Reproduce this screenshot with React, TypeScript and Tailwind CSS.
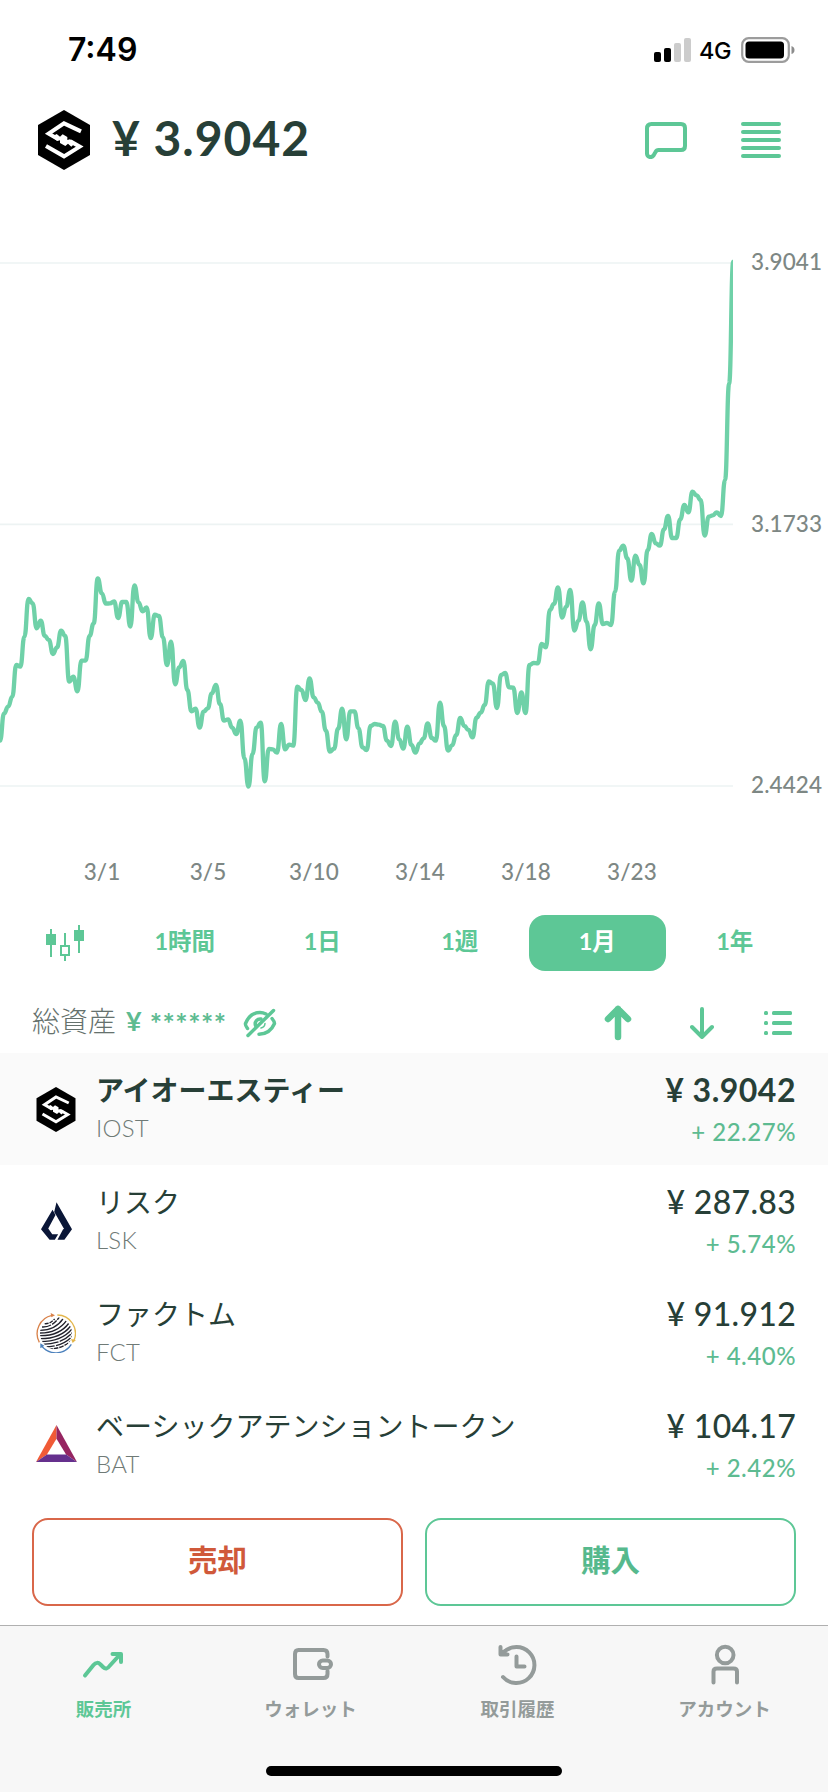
import React, { useMemo, useState } from 'react'
import clsx from 'clsx'

// 価格推移（チャート座標系）
const SERIES = [
  1502, 1420, 1400, 1370, 1275, 1280, 1190, 1077, 1090, 1165, 1142, 1188, 1200, 1242, 1222, 1172,
  1188, 1325, 1310, 1354, 1262, 1262, 1188, 1150, 1015, 1060, 1091, 1090, 1084, 1134, 1086, 1086,
  1160, 1036, 1087, 1114, 1102, 1194, 1124, 1128, 1192, 1275, 1205, 1333, 1282, 1263, 1350, 1414,
  1406, 1463, 1415, 1405, 1360, 1335, 1392, 1442, 1438, 1463, 1482, 1442, 1555, 1640, 1542, 1462,
  1448, 1624, 1527, 1528, 1538, 1452, 1528, 1514, 1517, 1340, 1350, 1380, 1315, 1372, 1388, 1415,
  1472, 1535, 1526, 1466, 1406, 1498, 1414, 1414, 1465, 1522, 1530, 1458, 1452, 1454, 1458, 1502,
  1518, 1445, 1498, 1526, 1460, 1515, 1538, 1510, 1495, 1450, 1494, 1502, 1388, 1458, 1532, 1516,
  1485, 1434, 1458, 1470, 1492, 1433, 1418, 1395, 1324, 1331, 1404, 1305, 1299, 1342, 1343, 1419,
  1357, 1419, 1275, 1269, 1270, 1212, 1222, 1110, 1092, 1042, 1133, 1100, 1050, 1172, 1142, 1087,
  1145, 1228, 1155, 1090, 1152, 1149, 1155, 1055, 932, 917, 955, 1022, 947, 975, 1030, 930,
  882, 910, 917, 868, 828, 894, 894, 838, 795, 817, 755, 766, 780, 887, 830, 826,
  817, 828, 720, 430, 65
]

const STEP = 12.22
const GRID_LINES = [69, 853, 1638]
const PRICE_LABELS = ['3.9041', '3.1733', '2.4424']
const DATE_LABELS = ['3/1', '3/5', '3/10', '3/14', '3/18', '3/23']
const PERIODS = ['1時間', '1日', '1週', '1月', '1年']

interface IconProps {
  className?: string
}

function IostLogo({ className }: IconProps) {
  return (
    <svg viewBox="0 0 156 180" className={className}>
      <path d="M78 0L156 45V135L78 180L0 135V45Z" fill="#000" />
      <g fill="none" stroke="#fff" strokeWidth="12">
        <path d="M129 64L78 40L32 71L60 87" />
        <path d="M24 108L78 139L125 110L97 94" />
      </g>
      <path
        d="M42 80L56 72L66 80L74 73L88 81V90L96 88L112 98L100 110L90 101L82 108L66 99V91L58 93Z"
        fill="#fff"
      />
    </svg>
  )
}

function LiskLogo() {
  return (
    <svg viewBox="0 0 94 114" className="h-[38px] w-[31px]" fill="#0a1637">
      <path d="M47 0L94 82L71 114H50L67 82L70 81L47 41L40 30Z" />
      <path d="M35 23L44 39L22 80L34 97H52L42 114H26L0 82Z" />
    </svg>
  )
}

function FactomLogo() {
  return (
    <svg viewBox="0 0 120 120" className="size-10" fill="none">
      <defs>
        <clipPath id="globe">
          <circle cx="60" cy="61" r="48" />
        </clipPath>
      </defs>
      <g clipPath="url(#globe)" stroke="#22222c" strokeWidth="4">
        <path d="M26 32Q40 34 56 18" strokeDasharray="12 3" />
        <path d="M18 42Q48 44 70 12" strokeDasharray="28 4 18 3" />
        <path d="M12 52Q58 52 82 16" />
        <path d="M10 60Q64 61 92 22" />
        <path d="M8 68Q70 70 99 30" />
        <path d="M10 77Q74 78 104 39" />
        <path d="M12 86Q78 86 108 48" />
        <path d="M18 94Q80 94 110 58" strokeDasharray="50 4 40 3" />
        <path d="M26 102Q82 101 110 68" strokeDasharray="30 4 50 3" />
        <path d="M36 108Q82 108 108 80" strokeDasharray="14 3" />
      </g>
      <path d="M10 88A56 56 0 0 1 48 7" stroke="#d9824a" strokeWidth="4" />
      <path d="M64 6A55 55 0 0 1 114 82" stroke="#e3b64c" strokeWidth="4" />
      <path d="M106 94A55 55 0 0 1 16 98" stroke="#4d82bd" strokeWidth="4" />
      <path d="M44 0L57 7L46 13Z" fill="#d9824a" />
      <path d="M105 78L120 81L110 90Z" fill="#e3b64c" />
      <path d="M13 106L13 91L25 98Z" fill="#4d82bd" />
    </svg>
  )
}

function BatLogo() {
  return (
    <svg viewBox="0 0 120 108" className="mb-[3px] h-[37px] w-[41px]">
      <path d="M60 0V40L32 86L0 108Z" fill="#f05a36" />
      <path d="M60 0L120 108L88 86L60 40Z" fill="#962561" />
      <path d="M0 108L32 86H88L120 108Z" fill="#65308d" />
    </svg>
  )
}

function CandleIcon() {
  return (
    <svg viewBox="0 0 38 36" className="h-9 w-[38px]" fill="#5dc796">
      <path d="M4 4h2v5h4v11H6v12H4V20H0V9h4z" />
      <path d="M18 8h2v12h4v11h-4v5h-2v-5h-4V20h4zM16 22v7h6v-7z" fillRule="evenodd" />
      <path d="M32 0h2v5h4v11h-4v12h-2V16h-4V5h4z" />
    </svg>
  )
}

function EyeOffIcon() {
  return (
    <svg viewBox="0 0 34 30" className="h-[30px] w-[34px]" fill="none" stroke="#5dc796" strokeWidth="3.500" strokeLinecap="round" strokeLinejoin="round">
      <path d="M4.500 20.500Q2 17 2.500 15.500Q7 4.500 17 4.500Q20 4.500 23 6" />
      <path d="M29 10.500Q31.500 13.500 31.500 15.500Q27 26 16 26.200" />
      <path d="M12.500 17.500A5 5 0 0 1 18 11" />
      <path d="M22 15.500A5 5 0 0 1 18 20" strokeWidth="1.500" />
      <path d="M5 27.500L30.500 2.500" />
    </svg>
  )
}

function PriceChart() {
  const path = useMemo(
    () =>
      SERIES.map((y, i) => {
        if (i === 0) return `M0 ${y}`
        const x = i * STEP
        const mid = x - STEP / 2
        return `C${mid.toFixed(1)} ${SERIES[i - 1]} ${mid.toFixed(1)} ${y} ${x.toFixed(1)} ${y}`
      }).join(''),
    []
  )

  return (
    <div className="mt-[59px] flex h-[560px]">
      <svg viewBox="0 0 2199 1680" className="h-[560px] w-[733px] shrink-0">
        {GRID_LINES.map(y => (
          <line key={y} x1="0" x2="2199" y1={y} y2={y} stroke="#edf3f3" strokeWidth="5" />
        ))}
        <path d={path} fill="none" stroke="#6fd1a8" strokeWidth="13" strokeLinejoin="round" />
      </svg>
      <div className="flex h-[559px] flex-col justify-between pt-[8px] pl-[18px] text-[22.500px] leading-[28px] font-medium tracking-[0.1px] text-[#7d8784]">
        {PRICE_LABELS.map(label => (
          <span key={label}>{label}</span>
        ))}
      </div>
    </div>
  )
}

const COINS = [
  { name: 'アイオーエスティー', symbol: 'IOST', price: '3.9042', change: '22.27', logo: <IostLogo className="h-[45px] w-10" /> },
  { name: 'リスク', symbol: 'LSK', price: '287.83', change: '5.74', logo: <LiskLogo /> },
  { name: 'ファクトム', symbol: 'FCT', price: '91.912', change: '4.40', logo: <FactomLogo /> },
  { name: 'ベーシックアテンショントークン', symbol: 'BAT', price: '104.17', change: '2.42', logo: <BatLogo /> }
]

const NAV_ITEMS = [
  {
    label: '販売所',
    icon: (
      <>
        <path d="M2 31.500L10.500 21Q14 17 17.500 20.500L20 23Q23.500 26.500 26.500 22L37 10.500" />
        <path d="M29.500 10H38V18" />
      </>
    )
  },
  {
    label: 'ウォレット',
    icon: (
      <>
        <path d="M37.500 12.500V10Q37.500 6 33.500 6H8.500Q5 6 5 10V30Q5 34 8.500 34H33.500Q37.500 34 37.500 30V27" />
        <rect x="29" y="16.500" width="12" height="7.500" rx="3.700" />
      </>
    )
  },
  {
    label: '取引履歴',
    icon: (
      <>
        <path d="M6.500 8.500A18 18 0 1 1 6 33" />
        <path d="M3.500 3V10.500H10.500M4 10L8 7" />
        <path d="M19.500 12.500V22.500H27.500" />
      </>
    )
  },
  {
    label: 'アカウント',
    icon: (
      <>
        <circle cx="21.200" cy="11" r="8.300" />
        <path d="M9.500 38.500V27.500Q9.500 24.500 13 24.500H29.500Q33 24.500 33 27.500V38.500" />
      </>
    )
  }
]

export default function App() {
  const [period, setPeriod] = useState('1月')
  const [selected, setSelected] = useState('IOST')
  const [tab, setTab] = useState('販売所')

  return (
    <div className="flex h-[1792px] w-[828px] flex-col overflow-hidden bg-white font-['Lato','Noto_Sans_CJK_JP',sans-serif] text-[#273f37]">
      {/* ステータスバー */}
      <div className="flex h-[99px] shrink-0 items-center justify-between pr-[33px] pl-[68px] font-['Inter'] text-black">
        <span className="text-[32px] font-semibold">7:49</span>
        <div className="flex items-center">
          <svg viewBox="0 0 37 24" className="h-6 w-[37px]">
            <rect x="0" y="14" width="7" height="10" rx="2" />
            <rect x="10" y="10" width="7" height="14" rx="2" />
            <rect x="20" y="5" width="7" height="19" rx="2" fill="#ccc" />
            <rect x="30" y="0" width="7" height="24" rx="2" fill="#ccc" />
          </svg>
          <span className="ml-[8px] w-[34px] pt-[2px] text-[23.500px] font-medium tracking-[-0.5px]">4G</span>
          <svg viewBox="0 0 54 26" className="ml-[8px] h-[26px] w-[54px]">
            <rect x="1.200" y="1.200" width="46.600" height="23.600" rx="6.500" fill="none" stroke="#9c9c9c" strokeWidth="2.200" />
            <rect x="4.500" y="4.500" width="38.500" height="17" rx="3.500" />
            <path d="M50.500 9Q53.500 10 53.500 13T50.500 17Z" fill="#8c8c8c" />
          </svg>
        </div>
      </div>

      {/* 現在価格 */}
      <header className="flex h-[82px] shrink-0 items-center pr-[47px] pl-[38px]">
        <IostLogo className="h-[60px] w-[52px]" />
        <h1 className="ml-[22px] flex-1 pb-[5px] text-[48px] leading-none font-bold tracking-[1px]">¥ 3.9042</h1>
        <button className="mr-[54px]">
          <svg viewBox="0 0 42 37" className="h-[37px] w-[42px]" fill="none" stroke="#5dc796" strokeWidth="4" strokeLinejoin="round">
            <path d="M6.500 2H36Q40 2 40 6V24Q40 28 36 28H13.500Q11.500 28 10.500 30L8.500 33.500Q7 35.500 4.500 35Q2 34 2 31.500V6.500Q2 2 6.500 2Z" />
          </svg>
        </button>
        <button className="flex w-10 flex-col gap-1">
          {[0, 1, 2, 3, 4].map(i => (
            <span key={i} className="h-1 rounded-full bg-[#5dc796]" />
          ))}
        </button>
      </header>

      <PriceChart />
      <div className="mt-[52px] flex h-10 shrink-0 items-center pl-[49px] text-[22.500px] font-medium tracking-[0.1px] text-[#7d8784]">
        {DATE_LABELS.map(date => (
          <span key={date} className="w-[106px] text-center">{date}</span>
        ))}
      </div>

      {/* 期間切り替え */}
      <div className="mt-[23px] flex h-14 shrink-0 items-center pl-[14px]">
        <button className="flex w-[102px] justify-center">
          <CandleIcon />
        </button>
        {PERIODS.map(p => (
          <button
            key={p}
            onClick={() => setPeriod(p)}
            className={clsx(
              'h-14 w-[137.500px] rounded-2xl pb-[3px] text-[23.500px] font-bold',
              p === period ? 'bg-[#5dc796] text-white' : 'text-[#5dc796]'
            )}
          >
            {p}
          </button>
        ))}
      </div>

      {/* 総資産 */}
      <div className="mt-[21px] flex h-[61px] shrink-0 items-center pr-9 pl-8">
        <span className="pb-1 text-[28px] font-light text-[#65716d]">総資産</span>
        <span className="ml-[10px] pb-[3px] text-[27px] font-bold text-[#5dbb91]">¥</span>
        <span className="ml-[8px] w-[78px] text-[29px] font-bold tracking-[0.5px] text-[#5dbb91]">******</span>
        <button className="ml-[15px]">
          <EyeOffIcon />
        </button>
        <div className="ml-auto flex items-center">
          <svg viewBox="0 0 28 36" className="h-9 w-7" fill="none" stroke="#5dc796" strokeWidth="6.500" strokeLinecap="round" strokeLinejoin="round">
            <path d="M14 4V32M4 14L14 4L24 14" />
          </svg>
          <svg viewBox="0 0 24 32" className="ml-[58px] h-8 w-6" fill="none" stroke="#5dc796" strokeWidth="4" strokeLinecap="round" strokeLinejoin="round">
            <path d="M12 2V30M2 20L12 30L22 20" />
          </svg>
          <svg viewBox="0 0 28 24" className="ml-[50px] h-6 w-7" fill="#5dc796">
            {[0, 10, 20].map(y => (
              <g key={y}>
                <rect x="0" y={y} width="4" height="4" rx="1.500" />
                <rect x="8" y={y} width="20" height="4" rx="1.500" />
              </g>
            ))}
          </svg>
        </div>
      </div>

      {/* 銘柄一覧 */}
      <ul className="shrink-0">
        {COINS.map(coin => (
          <li
            key={coin.symbol}
            onClick={() => setSelected(coin.symbol)}
            className={clsx('flex h-28 items-center pr-[32px]', coin.symbol === selected && 'bg-[#fafafa]')}
          >
            <div className="flex w-24 justify-center pl-4">{coin.logo}</div>
            <div className="flex flex-1 flex-col pb-[3px]">
              <span className={clsx('text-[28px] leading-10', coin.symbol === selected ? 'font-bold' : 'font-normal')}>
                {coin.name}
              </span>
              <span className="text-[24px] leading-9 font-light tracking-[0.2px] text-[#6f7a76]">{coin.symbol}</span>
            </div>
            <div className="flex flex-col items-end pt-[4px]">
              <span
                className={clsx(
                  'text-[32px] leading-[42px]',
                  coin.symbol === selected ? 'font-bold tracking-[0.5px]' : 'font-medium tracking-[0.3px]'
                )}
              >
                ¥ {coin.price}
              </span>
              <span className="text-[24px] leading-[42px] font-medium tracking-[0.5px] text-[#5dbb91]">+ {coin.change}%</span>
            </div>
          </li>
        ))}
      </ul>

      {/* 売買ボタン */}
      <div className="mt-[17px] flex h-[88px] shrink-0 gap-[22px] px-8 text-[29.500px] font-bold">
        <button className="flex-1 rounded-2xl border-2 border-[#d9674a] pb-1 text-[#d0593a]">売却</button>
        <button className="flex-1 rounded-2xl border-2 border-[#5dc796] pb-1 text-[#56b98d]">購入</button>
      </div>

      {/* 下部ナビゲーション */}
      <nav className="mt-[19px] flex flex-1 flex-col border-t border-[#b0b0b0] bg-[#f7f7f7]">
        <div className="flex">
          {NAV_ITEMS.map(item => (
            <button
              key={item.label}
              onClick={() => setTab(item.label)}
              className={clsx('flex flex-1 flex-col items-center pt-[18px]', item.label === tab ? 'text-[#5dc796]' : 'text-[#949b9a]')}
            >
              <svg viewBox="0 0 41 41" className="size-[41px] overflow-visible" fill="none" stroke="currentColor" strokeWidth="4" strokeLinecap="round" strokeLinejoin="round">
                {item.icon}
              </svg>
              <span className="mt-[10px] text-[18.500px] leading-7 font-bold">{item.label}</span>
            </button>
          ))}
        </div>
        <div className="mx-auto mt-auto mb-4 h-[10px] w-[296px] rounded-full bg-black" />
      </nav>
    </div>
  )
}
